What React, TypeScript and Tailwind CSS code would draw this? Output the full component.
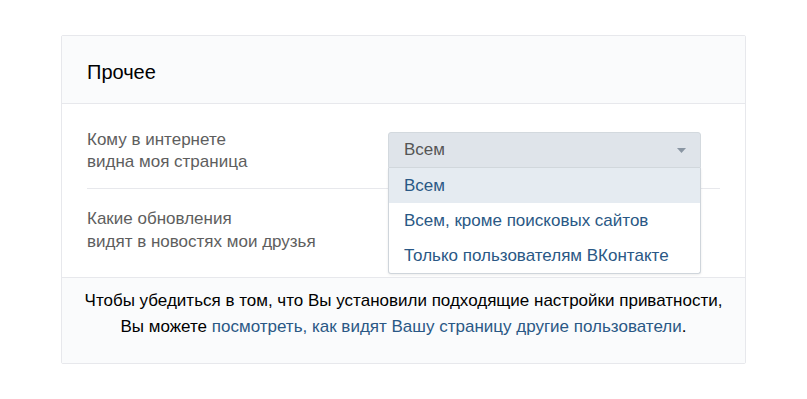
import { useState } from 'react';

const options = ['Всем', 'Всем, кроме поисковых сайтов', 'Только пользователям ВКонтакте'];

function Select() {
  const [value] = useState(options[0]);
  return (
    <div className="relative mt-[3px] w-[313px]">
      <div className="flex h-[36px] items-center justify-between rounded-t-[3px] border border-[#d3d9de] bg-[#dfe4ea] pl-[15px] pr-[14px] text-[17px] text-[#555]">
        <span>{value}</span>
        <svg width="9" height="5" viewBox="0 0 9 5">
          <path d="M0 0h9L4.5 5z" fill="#8a96a3" />
        </svg>
      </div>
      {/* open list */}
      <div className="absolute left-0 top-[36px] z-10 w-full rounded-b-[3px] border border-t-0 border-[#cfd5db] bg-white shadow-[0_1px_3px_rgba(0,0,0,0.08)]">
        {options.map((o, i) => (
          <div
            key={o}
            className={`flex h-[35px] items-center pl-[15px] text-[17px] text-[#2a5885] ${i === 0 ? 'bg-[#e5ebf1]' : ''}`}
          >
            {o}
          </div>
        ))}
      </div>
    </div>
  );
}

export default function App() {
  return (
    <div className="min-h-[399px] bg-white pl-[61px] pt-[35px]" style={{ fontFamily: '"Liberation Sans", Arial, sans-serif' }}>
      <div className="w-[685px] rounded-[2px] border border-[#e7e8ec]">
        <div className="flex h-[68px] items-center border-b border-[#e7e8ec] bg-[#fafbfc] pl-[25px] pt-[4px] text-[20px] text-black">
          Прочее
        </div>

        <div className="px-[25px]">
          <div className="flex h-[85px] border-b border-[#e7e8ec] pt-[25px]">
            <div className="w-[301px] text-[17px] leading-[22px] text-[#5e5e5e]">
              Кому в интернете
              <br />
              видна моя страница
            </div>
            <Select />
          </div>
          <div className="flex h-[88px] pt-[18px]">
            <div className="w-[301px] text-[17px] leading-[23px] text-[#5e5e5e]">
              Какие обновления
              <br />
              видят в новостях мои друзья
            </div>
          </div>
        </div>

        <div className="border-t border-[#e7e8ec] bg-[#fafbfc] pb-[23px] pt-[10px] text-center text-[17px] leading-[26px] text-black">
          Чтобы убедиться в том, что Вы установили подходящие настройки приватности,
          <br />
          Вы можете <a className="text-[#2a5885]">посмотреть, как видят Вашу страницу другие пользователи</a>.
        </div>
      </div>
    </div>
  );
}
